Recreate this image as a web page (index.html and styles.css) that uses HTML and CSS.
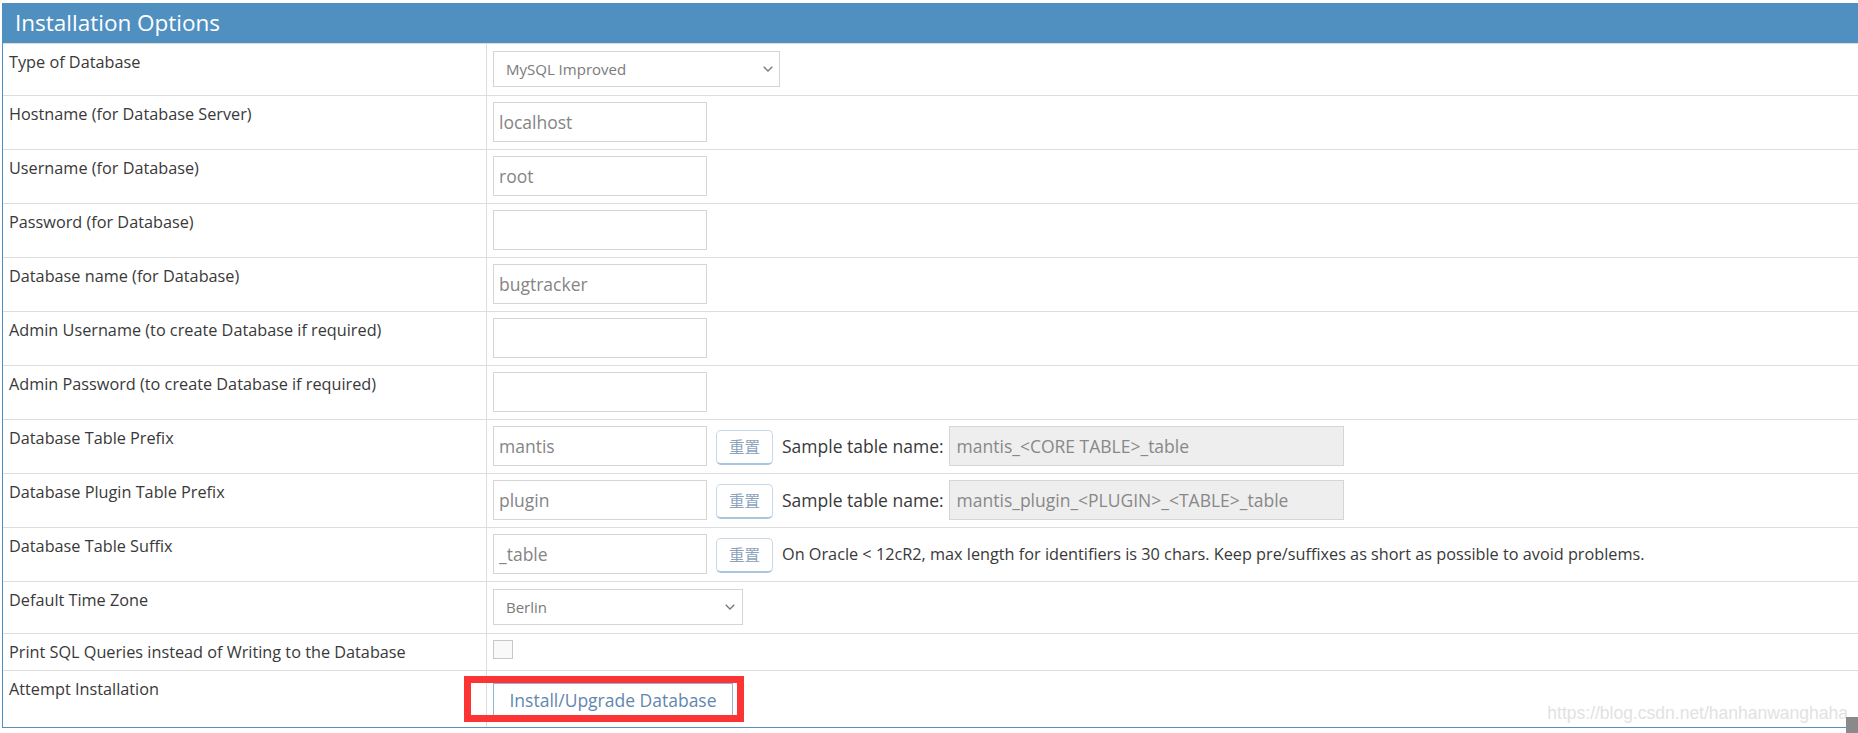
FILE: index.html
```html
<!DOCTYPE html>
<html lang="en">
<head>
<meta charset="utf-8">
<title>Installation Options</title>
<link rel="stylesheet" href="styles.css">
</head>
<body>
<div class="page">
  <div class="widget">
    <div class="widget-header"><h4 class="widget-title">Installation Options</h4></div>
    <div class="rows">
      <div class="row row-select">
        <div class="label">Type of Database</div>
        <div class="value">
          <div class="select select-db"><span>MySQL Improved</span>
            <svg class="chev" width="10" height="6" viewBox="0 0 10 6"><path d="M0.7 0.7 L5 5 L9.3 0.7" fill="none" stroke="#777" stroke-width="1.3"/></svg>
          </div>
        </div>
      </div>
      <div class="row row-input">
        <div class="label">Hostname (for Database Server)</div>
        <div class="value"><input class="input" type="text" value="localhost"></div>
      </div>
      <div class="row row-input">
        <div class="label">Username (for Database)</div>
        <div class="value"><input class="input" type="text" value="root"></div>
      </div>
      <div class="row row-input">
        <div class="label">Password (for Database)</div>
        <div class="value"><input class="input" type="password" value=""></div>
      </div>
      <div class="row row-input">
        <div class="label">Database name (for Database)</div>
        <div class="value"><input class="input" type="text" value="bugtracker"></div>
      </div>
      <div class="row row-input">
        <div class="label">Admin Username (to create Database if required)</div>
        <div class="value"><input class="input" type="text" value=""></div>
      </div>
      <div class="row row-input">
        <div class="label">Admin Password (to create Database if required)</div>
        <div class="value"><input class="input" type="password" value=""></div>
      </div>
      <div class="row row-input">
        <div class="label">Database Table Prefix</div>
        <div class="value">
          <input class="input" type="text" value="mantis">
          <button class="reset" type="button">重置</button>
          <span class="note">Sample table name:</span>
          <input class="input sample" type="text" value="mantis_&lt;CORE TABLE&gt;_table" readonly>
        </div>
      </div>
      <div class="row row-input">
        <div class="label">Database Plugin Table Prefix</div>
        <div class="value">
          <input class="input" type="text" value="plugin">
          <button class="reset" type="button">重置</button>
          <span class="note">Sample table name:</span>
          <input class="input sample" type="text" value="mantis_plugin_&lt;PLUGIN&gt;_&lt;TABLE&gt;_table" readonly>
        </div>
      </div>
      <div class="row row-input">
        <div class="label">Database Table Suffix</div>
        <div class="value">
          <input class="input" type="text" value="_table">
          <button class="reset" type="button">重置</button>
          <span class="note note-small">On Oracle &lt; 12cR2, max length for identifiers is 30 chars. Keep pre/suffixes as short as possible to avoid problems.</span>
        </div>
      </div>
      <div class="row row-select">
        <div class="label">Default Time Zone</div>
        <div class="value">
          <div class="select select-tz"><span>Berlin</span>
            <svg class="chev" width="10" height="6" viewBox="0 0 10 6"><path d="M0.7 0.7 L5 5 L9.3 0.7" fill="none" stroke="#777" stroke-width="1.3"/></svg>
          </div>
        </div>
      </div>
      <div class="row row-check">
        <div class="label">Print SQL Queries instead of Writing to the Database</div>
        <div class="value"><span class="checkbox"></span></div>
      </div>
      <div class="row row-last">
        <div class="label">Attempt Installation</div>
        <div class="value"><button class="install" type="button">Install/Upgrade Database</button></div>
      </div>
    </div>
  </div>
  <div class="annot"></div>
  <div class="watermark">https://blog.csdn.net/hanhanwanghaha</div>
  <div class="corner"></div>
</div>
</body>
</html>
```

FILE: styles.css
```css
html, body {
  margin: 0;
  padding: 0;
  background: #ffffff;
  overflow: hidden;
}
body {
  width: 1858px;
  height: 733px;
  font-family: "Open Sans", "Noto Sans", sans-serif;
  color: #393939;
}
.page {
  position: relative;
  width: 1858px;
  height: 733px;
  padding: 3px 0 0 2px;
  box-sizing: border-box;
  overflow: hidden;
}
.widget {
  width: 1880px;
  border-left: 1px solid #5090c1;
  border-bottom: 1px solid #5a8fbf;
}
.widget-header {
  height: 40px;
  background: #5090c1;
  margin-left: -1px;
  padding-left: 13px;
  display: flex;
  align-items: center;
}
.widget-title {
  margin: 0;
  font-weight: normal;
  font-size: 22.5px;
  line-height: 40px;
  color: #ffffff;
}
.row {
  display: flex;
  box-sizing: border-box;
  border-top: 1px solid #dddddd;
}
.row-select { height: 52px; }
.row-input { height: 54px; }
.row-check { height: 37px; }
.row-last { height: 57px; }
.label {
  width: 484px;
  flex: none;
  box-sizing: border-box;
  border-right: 1px solid #dddddd;
  padding: 7px 6px 0 6px;
  font-size: 16.25px;
  line-height: 22px;
}
.value {
  display: flex;
  align-items: flex-start;
  padding: 6px 6px 0 6px;
}
.row-select .value { padding-top: 7px; }
.row-last .value { padding-top: 12px; }
.select {
  height: 36px;
  box-sizing: border-box;
  border: 1px solid #d5d5d5;
  background: #fff;
  display: flex;
  align-items: center;
  justify-content: space-between;
  padding: 0 6px 0 12px;
  font-size: 15px;
  color: #7b7b7b;
}
.select-db { width: 287px; }
.select-tz { width: 250px; padding-right: 7px; }
.chev { flex: none; }
.input {
  width: 214px;
  height: 40px;
  box-sizing: border-box;
  margin: 0;
  border: 1px solid #d5d5d5;
  border-radius: 0;
  padding: 0 5px;
  background: #ffffff;
  font-family: "Open Sans", "Noto Sans", sans-serif;
  font-size: 17.5px;
  color: #858585;
  outline: none;
}
.input.sample {
  width: 395px;
  margin-left: 5px;
  padding: 0 7px;
  background: #eeeeee;
  color: #888888;
}
.reset {
  width: 57px;
  height: 35px;
  margin: 4px 0 0 9px;
  box-sizing: border-box;
  padding: 0;
  background: #ffffff;
  border: 1px solid #c9d9e8;
  border-bottom: 2px solid #a9c6df;
  border-radius: 5px;
  font-family: "Noto Sans CJK SC", "Noto Sans CJK JP", sans-serif;
  font-size: 15.5px;
  color: #8ca2bc;
  line-height: 1;
}
.note {
  margin-left: 9px;
  font-size: 17.5px;
  line-height: 40px;
  color: #393939;
  white-space: nowrap;
}
.note-small {
  font-size: 16.25px;
}
.checkbox {
  display: block;
  width: 20px;
  height: 19px;
  box-sizing: border-box;
  border: 1px solid #c8c8c8;
  background: #f9f9f9;
}
.install {
  width: 240px;
  height: 34px;
  box-sizing: border-box;
  margin: 0;
  padding: 0;
  background: #ffffff;
  border: 1px solid #8db4d8;
  font-family: "Open Sans", "Noto Sans", sans-serif;
  font-size: 17.5px;
  color: #5f87ae;
}
.annot {
  position: absolute;
  left: 464px;
  top: 676px;
  width: 280px;
  height: 46px;
  box-sizing: border-box;
  border: 7px solid #fd3434;
}
.watermark {
  position: absolute;
  right: 10px;
  top: 703px;
  font-family: "Liberation Sans", Arial, sans-serif;
  font-size: 17.5px;
  line-height: 20px;
  color: #e2e2e2;
  white-space: nowrap;
}
.corner {
  position: absolute;
  right: 0;
  bottom: 0;
  width: 12px;
  height: 16px;
  background: #8a8a8a;
}
```
